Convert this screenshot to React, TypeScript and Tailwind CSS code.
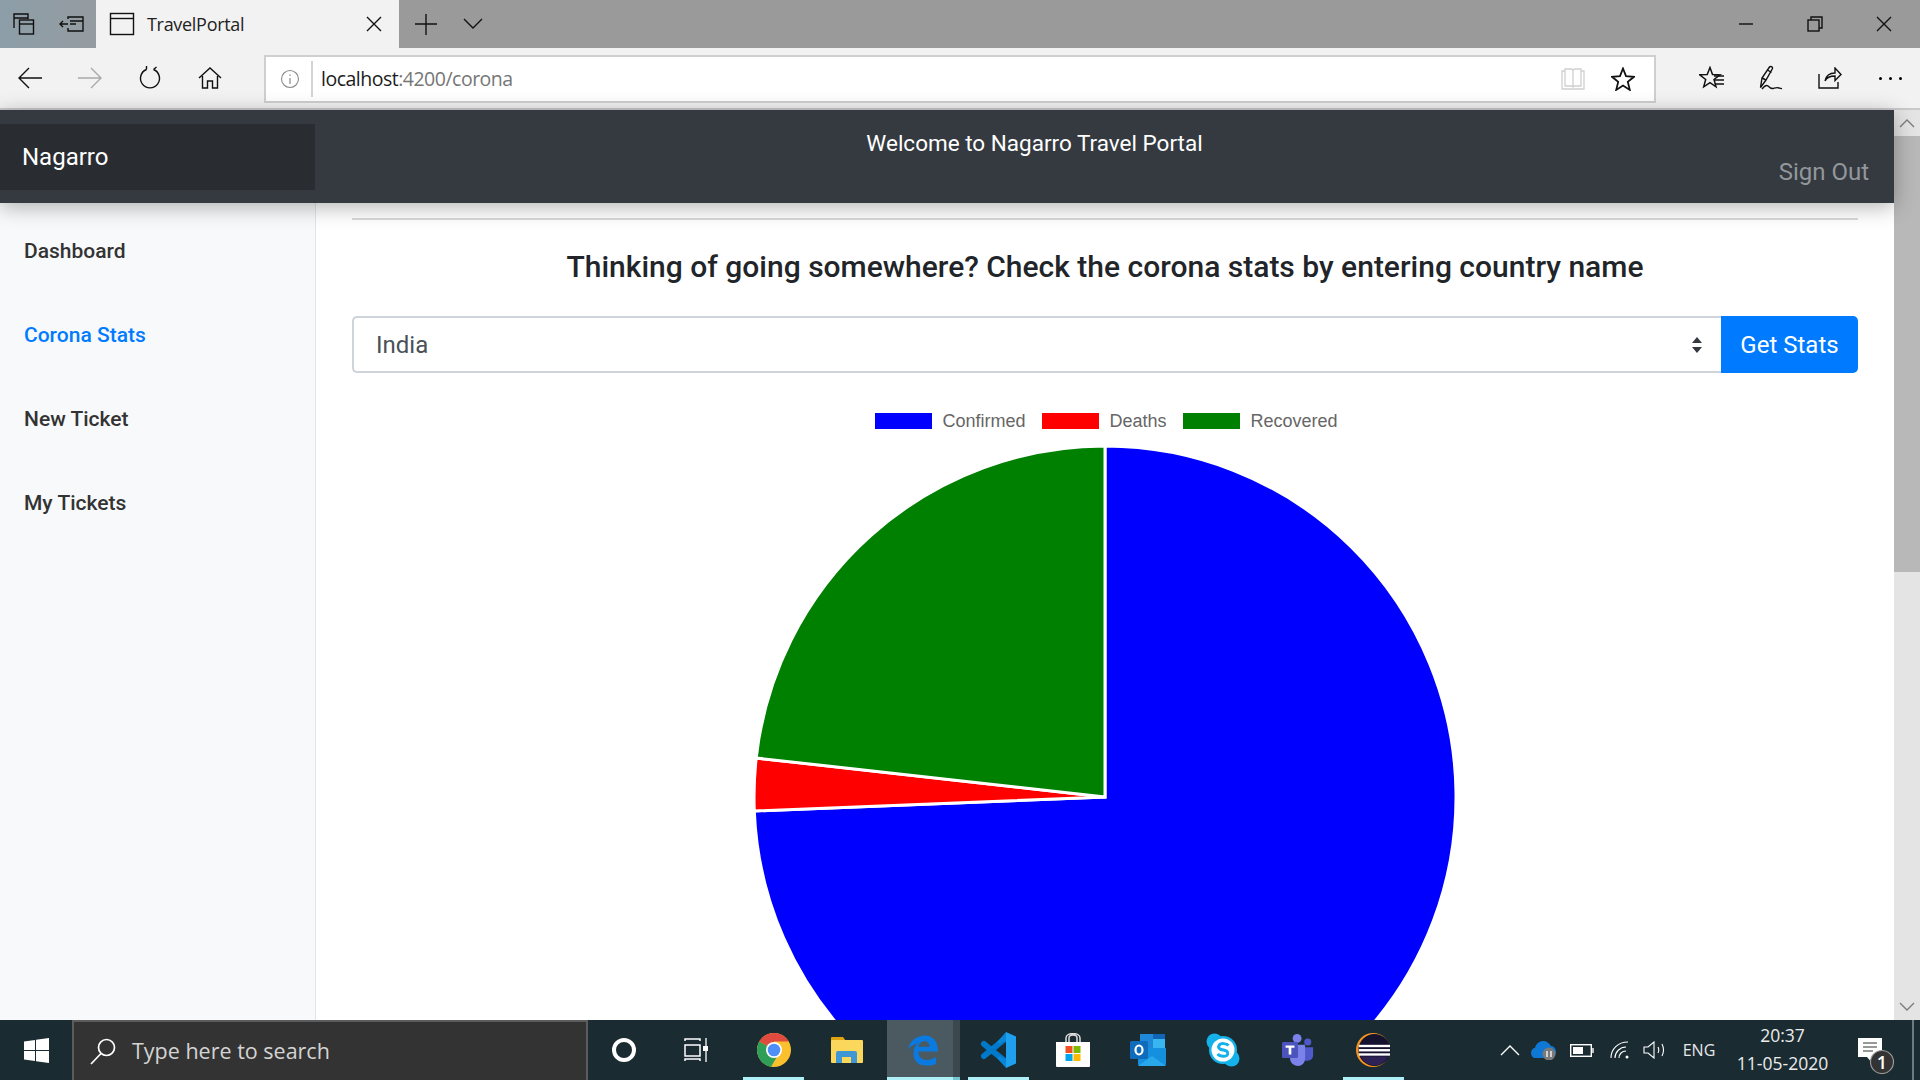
import React from "react";

const roboto = "font-['Roboto',sans-serif]";

function Ico({ w = 24, h = 24, vb, children, className = "" }: { w?: number; h?: number; vb?: string; children: React.ReactNode; className?: string }) {
  return (
    <svg width={w} height={h} viewBox={vb ?? `0 0 ${w} ${h}`} fill="none" stroke="currentColor" strokeWidth={1.4} className={"shrink-0 " + className}>
      {children}
    </svg>
  );
}

function TabBar() {
  return (
    <div className="h-12 flex items-stretch bg-gradient-to-r from-[#8d9ea8] from-0% to-[#9a9a9a] to-[9%] text-[#111]">
      <div className="w-12 flex items-center justify-center">
        <Ico w={24} h={24}><path d="M2 16V2h14v5M2 6h14" /><rect x="7.500" y="8" width="14" height="14" /><path d="M7.500 12h14" /></Ico>
      </div>
      <div className="w-12 flex items-center justify-center">
        <Ico w={26} h={20}><path d="M9 10H1m3-3-3 3 3 3M9 5V3h15v14H9v-3M11 7h13M11 10h6" /></Ico>
      </div>
      <div className="w-[303px] bg-[#f2f2f2] flex items-center pl-[13px] pr-[16px]">
        <Ico w={26} h={26}><rect x="1.500" y="2.500" width="23" height="21" /><path d="M1.500 7.500h23" /></Ico>
        <span className="ml-[12px] text-[18px] leading-6 font-['Open_Sans',sans-serif] tracking-[-0.3px] text-[#222] flex-1">TravelPortal</span>
        <Ico w={18} h={18}><path d="M2 2l14 14M16 2 2 16" /></Ico>
      </div>
      <div className="w-[54px] flex items-center justify-center">
        <Ico w={24} h={24}><path d="M12 2v21M1 12h22" /></Ico>
      </div>
      <div className="w-[40px] flex items-center justify-center">
        <Ico w={22} h={14}><path d="M2 2l9 9 9-9" /></Ico>
      </div>
      <div className="flex-1" />
      <div className="w-[69px] flex items-center justify-center"><Ico w={16} h={4}><path d="M1 2h14" /></Ico></div>
      <div className="w-[69px] flex items-center justify-center"><Ico w={16} h={16}><rect x="1" y="4" width="11" height="11" /><path d="M4 4V1h11v11h-3" /></Ico></div>
      <div className="w-[69px] flex items-center justify-center"><Ico w={16} h={16}><path d="M1 1l14 14M15 1 1 15" /></Ico></div>
      <div className="w-[2px]" />
    </div>
  );
}

function ToolBar() {
  return (
    <div className="h-[62px] bg-[#f2f2f2] border-b-2 border-[#c9c9c9] flex items-start pt-[7px] text-[#111]">
      <div className="w-[60px] h-[46px] flex items-center justify-center"><Ico w={24} h={22}><path d="M24 11H1m10-10L1 11l10 10" /></Ico></div>
      <div className="w-[60px] h-[46px] flex items-center justify-center text-[#a9a9a9]"><Ico w={24} h={22}><path d="M0 11h23M13 1l10 10-10 10" /></Ico></div>
      <div className="w-[60px] h-[46px] flex items-center justify-center"><Ico w={24} h={24}><path d="M8.500 3.500a9.500 9.500 0 1 0 7 0M8.500 3.500V0M15.500 3.500l3-2.500" /></Ico></div>
      <div className="w-[60px] h-[46px] flex items-center justify-center"><Ico w={24} h={24}><path d="M1 12 12 2l11 10M4.500 10v12h5v-7h5v7h5V10" /></Ico></div>
      <div className="ml-[24px] w-[1392px] h-[48px] bg-white border-2 border-[#cfcfcf] flex items-center shrink-0">
        <div className="w-[45px] flex justify-center text-[#8a8a8a]">
          <Ico w={20} h={20} className="ml-[2px]"><circle cx="10" cy="10" r="8.500" strokeWidth={1.1} /><path d="M10 9v6M10 5.500v1.500" strokeWidth={1.2} /></Ico>
        </div>
        <div className="w-[2px] h-[36px] bg-[#d4d4d4]" />
        <div className="ml-[8px] flex-1 text-[19.500px] font-['Open_Sans',sans-serif] tracking-[-0.5px] text-[#1c1c1c]">
          localhost<span className="text-[#767676]">:4200/corona</span>
        </div>
        <div className="w-[24px] text-[#cfcfcf] mr-[26px]">
          <Ico w={24} h={24}><path d="M1 4h3V2h6c1 0 2 1 2 2 0-1 1-2 2-2h6v2h3v18H1zM4 4v15h7l1 1 1-1h7V4M12 4v16" strokeWidth={1.3} /></Ico>
        </div>
        <div className="w-[26px] mr-[17px]">
          <Ico w={24} h={24}><path d="m12 1.500 3 7.700 8 .6-6.200 5.100 2 8-6.800-4.300-6.800 4.300 2-8L1 9.800l8-.6z" strokeWidth={1.8} /></Ico>
        </div>
      </div>
      <div className="ml-[26px] w-[60px] h-[46px] flex items-center justify-center">
        <Ico w={26} h={24}><path d="m11 1.500 2.500 7 7.500.3-6 4.700 2 7.300-6-4.200-6.300 4.200 2-7.300-6-4.700 7.500-.3z" strokeWidth={1.5} /><path d="M15 10h10M16 14h9M16 18h9" /></Ico>
      </div>
      <div className="w-[58px] h-[46px] flex items-center justify-center">
        <Ico w={24} h={26}><path d="M1.500 22.500 3 13 10.500 2c.8-1.200 3.500 0 3 1.500L7 15zM3 13l4 2M8.500 5l4 2.500" /><path d="M3 24c2.500-3 4-4.500 6-3 2 2 3 3 5 2.500 2-.5 4-1.500 6-.5 1 .3 2 .8 3 .5" /></Ico>
      </div>
      <div className="w-[60px] h-[46px] flex items-center justify-center">
        <Ico w={24} h={22}><path d="M1 7v14h19v-6M7 14c1-5 5-8 10-8V1l6 6.500-6 6V9c-4 0-8 1-10 5z" /></Ico>
      </div>
      <div className="w-[60px] h-[46px] flex items-center justify-center gap-[7px]">
        <span className="w-[3px] h-[3px] bg-black rounded-full" /><span className="w-[3px] h-[3px] bg-black rounded-full" /><span className="w-[3px] h-[3px] bg-black rounded-full" />
      </div>
    </div>
  );
}

function NavBar() {
  return (
    <div className={`relative z-10 h-[93px] bg-[#343a40] pt-[14px] flex items-start shadow-[0_4px_20px_rgba(0,0,0,0.3)] ${roboto}`}>
      <div className="w-[315px] h-[66px] bg-[#292d32] text-white text-[24px] flex items-center pl-[22px] shrink-0">Nagarro</div>
      <div className="flex-1 relative h-full text-center text-white text-[22.500px] leading-[34px] pt-[2px] pr-[140px]">
        <span>Welcome to Nagarro Travel Portal</span>
        <span className="absolute right-[25px] top-[31px] text-[#93979b] text-[24px]">Sign Out</span>
      </div>
    </div>
  );
}

function Sidebar() {
  const items = ["Dashboard", "Corona Stats", "New Ticket", "My Tickets"];
  return (
    <div className={`w-[316px] shrink-0 bg-[#f8f9fa] border-r border-[#e3e4e5] pt-[31px] ${roboto}`}>
      {items.map((t, i) => (
        <div key={t} className={`h-[84px] pl-[24px] text-[21px] leading-[34px] font-medium ${i === 1 ? "text-[#007bff]" : "text-[#333]"}`}>{t}</div>
      ))}
    </div>
  );
}

function Pie() {
  return (
    <svg width="706" height="706" viewBox="-2 -2 706 706" className="block mx-auto mt-[15px]">
      <g stroke="#fff" strokeWidth="3">
        <path d="M351 351 L351 0 A351 351 0 1 1 0.300 365 Z" fill="#0000ff" />
        <path d="M351 351 L0.300 365 A351 351 0 0 1 2.200 312 Z" fill="#ff0000" />
        <path d="M351 351 L2.200 312 A351 351 0 0 1 351 0 Z" fill="#008000" />
      </g>
    </svg>
  );
}

function Main() {
  const legend = [
    ["Confirmed", "bg-[#0000ff]", "w-[83px]", "mr-[16px]"],
    ["Deaths", "bg-[#ff0000]", "w-[57px]", "mr-[16px]"],
    ["Recovered", "bg-[#008000]", "w-[85px]", ""],
  ];
  return (
    <div className={`flex-1 min-w-0 bg-white px-[36px] ${roboto} overflow-hidden`}>
      <div className="h-[15px]" />
      <div className="h-[2px] bg-[#d8d9da]" />
      <h4 className="mt-[29px] h-[36px] text-center text-[30px] leading-[36px] font-medium text-[#212529] whitespace-nowrap">
        Thinking of going somewhere? Check the corona stats by entering country name
      </h4>
      <div className="mt-[31px] flex h-[57px]">
        <div className="flex-1 flex items-center border-2 border-r-0 border-[#ced4da] rounded-l-[5px] pl-[22px] pr-[18px] text-[#495057] text-[24px]">
          <span className="flex-1">India</span>
          <svg width="12" height="18" viewBox="0 0 12 18" className="shrink-0" fill="#343a40"><path d="M6 1l5 6H1zM6 17l5-6H1z" /></svg>
        </div>
        <div className="w-[137px] bg-[#007bff] text-white text-[24px] flex items-center justify-center rounded-r-[5px]">Get Stats</div>
      </div>
      <div className="mt-[40px] flex justify-center items-center h-[16px] font-['Liberation_Sans',sans-serif] text-[18px] text-[#666]">
        {legend.map(([t, c, w, m]) => (
          <div key={t} className="flex items-center">
            <span className={`w-[57px] h-[16px] ${c}`} />
            <span className={`ml-[11px] ${m} ${w} whitespace-nowrap`}>{t}</span>
          </div>
        ))}
      </div>
      <Pie />
    </div>
  );
}

function Scrollbar() {
  return (
    <div className="w-[26px] shrink-0 bg-[#e4e4e4] flex flex-col">
      <div className="h-[26px] flex items-center justify-center text-[#7c7c7c]"><Ico w={16} h={10}><path d="M1 9l7-7 7 7" /></Ico></div>
      <div className="h-[436px] bg-[#b8b8b8]" />
      <div className="flex-1" />
      <div className="h-[26px] flex items-center justify-center text-[#7c7c7c]"><Ico w={16} h={10}><path d="M1 1l7 7 7-7" /></Ico></div>
    </div>
  );
}

function Slot({ w, children, className = "" }: { w: string; children: React.ReactNode; className?: string }) {
  return <div className={`relative h-full flex items-center justify-center shrink-0 ${w} ${className}`}>{children}</div>;
}
const Under = ({ cls = "left-[3px] right-[3px]" }: { cls?: string }) => <span className={`absolute bottom-0 h-[3px] bg-[#aef0f8] ${cls}`} />;

function Taskbar() {
  return (
    <div className="h-[60px] bg-[#1a2b31] flex items-stretch text-white relative shrink-0">
      <div className="w-[72px] flex items-center justify-center shrink-0">
        <svg width="25" height="25" viewBox="0 0 25 25" fill="#fff"><path d="M0 3.500 11 2v10H0zM12 1.800 25 0v12H12zM0 13h11v10L0 21.500zM12 13h13v12l-13-1.800z" /></svg>
      </div>
      <div className="w-[516px] shrink-0 bg-[#333] border-2 border-b-0 border-[#5c5c5c] flex items-center pl-[15px] font-['Open_Sans',sans-serif] text-[21.500px] text-[#d4d4d4]">
        <Ico w={28} h={28} className="text-white"><circle cx="17.500" cy="10.500" r="8" strokeWidth={1.7} /><path d="M12 16.500 2 27" strokeWidth={1.7} /></Ico>
        <span className="ml-[15px]">Type here to search</span>
      </div>
      <Slot w="w-[72px]"><span className="w-[24px] h-[24px] rounded-full border-[4px] border-white" /></Slot>
      <Slot w="w-[72px]">
        <Ico w={24} h={24}><path d="M1 3V1h15v2M1 23v-2h15v2M1 7h15v11H1z" strokeWidth={1.5} /><path d="M22 0v24" strokeWidth={1.3} /></Ico>
        <span className="absolute left-[43px] top-[26px] w-[5px] h-[5px] bg-white" />
      </Slot>
      {/* chrome */}
      <Slot w="w-[67px] ml-[8px]">
        <svg width="34" height="34" viewBox="0 0 34 34">
          <circle cx="17" cy="17" r="17" fill="#fbc02d" />
          <path d="M17 17 2.300 8.500A17 17 0 0 1 31.700 8.500H17z" fill="#e04a3f" />
          <path d="M17 17 2.300 8.500A17 17 0 0 0 14 33.700l6-10z" fill="#2f9e57" />
          <circle cx="17" cy="17" r="8" fill="#fff" /><circle cx="17" cy="17" r="6.300" fill="#4f8ef7" />
        </svg>
        <Under />
      </Slot>
      {/* explorer */}
      <Slot w="w-[80px]">
        <svg width="32" height="26" viewBox="0 0 32 26">
          <path d="M0 1a1 1 0 0 1 1-1h11l3 4H0z" fill="#e0a30f" />
          <rect x="0" y="3" width="32" height="23" rx="1" fill="#fbd75b" />
          <path d="M5 26V16a2 2 0 0 1 2-2h17a2 2 0 0 1 2 2v10h-6v-6h-9v6z" fill="#3f97d6" />
        </svg>
      </Slot>
      {/* edge */}
      <Slot w="w-[66px] bg-[#4a5a60] pl-[6px]">
        <svg width="30" height="31" viewBox="0 0 32 32">
          <path d="M0 15C2 5 10 0 18 0c8 0 14 6 14 17H11c0 6 4 9 9 9 4 0 7-1 10-3v7c-3 2-7 2-11 2-8 0-14-6-13-14 0-5 2-8 6-10-5 1-9 3-12 7zM11 12h12c0-4-2-6-6-6-3 0-5 2-6 6z" fill="#0a7ae0" fillRule="evenodd" />
        </svg>
        <Under cls="left-0 right-0" />
      </Slot>
      <div className="w-[7px] bg-[#3b494e] shrink-0 relative"><span className="absolute bottom-0 inset-x-0 h-[3px] bg-[#74c7d2]" /></div>
      {/* vscode */}
      <Slot w="w-[76px]">
        <svg width="36" height="36" viewBox="0 0 36 36">
          <path d="M4 12 26 30M4 24 26 6" stroke="#0179cb" strokeWidth="6" strokeLinecap="round" fill="none" />
          <path d="M26 0l10 4.500v27L26 36V6z" fill="#1fa0ee" />
          <path d="M26 0v8l-6 4-3-2zM26 36v-8l-6-4-3 2z" fill="#0a86d8" />
        </svg>
        <Under cls="left-[8px] right-[7px]" />
      </Slot>
      {/* store */}
      <Slot w="w-[74px]">
        <svg width="36" height="34" viewBox="0 0 36 34">
          <path d="M11 10V5c0-6 14-6 14 0v5M14 10V5c0-4 8-4 8 0v5" stroke="#ddd" strokeWidth="1.500" fill="none" />
          <path d="M1 9h34v24a1 1 0 0 1-1 1H2a1 1 0 0 1-1-1z" fill="#fff" />
          <rect x="10.500" y="13" width="7" height="7" fill="#f25022" /><rect x="18.500" y="13" width="7" height="7" fill="#7fba00" />
          <rect x="10.500" y="21" width="7" height="7" fill="#00a4ef" /><rect x="18.500" y="21" width="7" height="7" fill="#ffb900" />
        </svg>
      </Slot>
      {/* outlook */}
      <Slot w="w-[75px]">
        <svg width="36" height="32" viewBox="0 0 36 32">
          <path d="M10 0h25v16H10z" fill="#1f88d8" /><path d="M23 0h12v5H23z" fill="#1066b5" /><path d="M23 5h12v9H23z" fill="#38b6ef" />
          <path d="M8 14h28v16a2 2 0 0 1-2 2H10a2 2 0 0 1-2-2z" fill="#1490df" /><path d="M8 32l14-10 14 10z" fill="#28a8ea" />
          <rect x="0" y="7" width="18" height="18" rx="1.500" fill="#0f6cbd" /><ellipse cx="9" cy="16" rx="3.500" ry="4.500" fill="none" stroke="#fff" strokeWidth="2.200" />
        </svg>
      </Slot>
      {/* skype */}
      <Slot w="w-[75px]">
        <svg width="34" height="34" viewBox="0 0 34 34">
          <circle cx="8.500" cy="8.500" r="8" fill="#14b1ea" /><circle cx="25.500" cy="25.500" r="8" fill="#14b1ea" /><circle cx="17" cy="17" r="14" fill="#14b1ea" />
          <circle cx="17" cy="17" r="11.500" fill="#fff" />
          <path d="M22.500 12.500c-1.500-2-8-3-9.500 0-1.500 3 1.500 4 4.500 4.500 3 .5 5 1.500 4 4.500-1 2.500-7.500 2.500-10-.5" stroke="#14b1ea" strokeWidth="3" fill="none" />
        </svg>
      </Slot>
      {/* teams */}
      <Slot w="w-[75px]">
        <svg width="36" height="32" viewBox="0 0 36 36">
          <circle cx="17" cy="5" r="5" fill="#7b83eb" /><circle cx="29" cy="9" r="4" fill="#5059c9" />
          <path d="M24 15h11v9c0 4-3 6-6 6h-5z" fill="#5059c9" />
          <path d="M9 12h17v15c0 6-4 9-8 9s-9-3-9-9z" fill="#7b83eb" />
          <rect x="0" y="9" width="18" height="18" rx="1.500" fill="#4b53bc" /><path d="M4 13h10v2.500h-3.500V23h-3v-7.500H4z" fill="#fff" />
        </svg>
      </Slot>
      {/* eclipse */}
      <Slot w="w-[76px]">
        <svg width="36" height="34" viewBox="0 0 36 36">
          <circle cx="18" cy="18" r="18" fill="#f7941e" /><circle cx="19.500" cy="18" r="17" fill="#15122f" /><path d="M5 25h29a16 16 0 0 1-29 0z" fill="#2c2255" />
          <rect x="3" y="12.500" width="33" height="2.500" fill="#fff" /><rect x="3" y="17" width="33" height="2.500" fill="#fff" /><rect x="3" y="21.500" width="33" height="2.500" fill="#fff" />
        </svg>
        <Under cls="left-[8px] right-[7px]" />
      </Slot>
      <div className="flex-1" />
      {/* tray */}
      <Slot w="w-[30px]"><Ico w={20} h={11}><path d="M1 10l9-9 9 9" /></Ico></Slot>
      <Slot w="w-[38px]">
        <svg width="26" height="20" viewBox="0 0 26 20"><path d="M0 13c0-3 2-5 4-5 1-4 4-7 8-7s6 2 8 5c3 0 5 3 5 6 0 3-3 6-6 6H4c-2 0-4-2-4-5z" fill="#0f78d4" /><circle cx="18" cy="14" r="6.500" fill="#7a7a7a" /><path d="M16 11v6M20 11v6" stroke="#fff" strokeWidth="1.300" /></svg>
      </Slot>
      <Slot w="w-[38px]"><Ico w={24} h={13}><rect x=".7" y=".7" width="20.600" height="11.600" /><rect x="3" y="3" width="10" height="7" fill="#fff" stroke="none" /><path d="M23 4v5" /></Ico></Slot>
      <Slot w="w-[37px]"><Ico w={20} h={18}><path d="M1 17C1 8 8 1 18 1M5 17c0-6 5-11 11-11M9 17c0-4 3-7 7-7" strokeWidth={1.1} /><circle cx="17" cy="16" r="1.500" fill="#fff" stroke="none" /></Ico></Slot>
      <Slot w="w-[33px]"><Ico w={24} h={18}><path d="M1 6h4l6-5v16l-6-5H1zM15 6c1 2 1 4 0 6M19 3c2 4 2 8 0 12" strokeWidth={1.1} /></Ico></Slot>
      <Slot w="w-[56px]"><span className="font-['Open_Sans',sans-serif] text-[16px] text-[#e8e8e8]">ENG</span></Slot>
      <div className="w-[111px] shrink-0 flex flex-col items-center font-['Open_Sans',sans-serif] text-[17.500px] leading-[28px] text-[#ececec] pt-[1px]">
        <span>20:37</span><span>11-05-2020</span>
      </div>
      <Slot w="w-[74px]">
        <svg width="40" height="48" viewBox="0 0 40 48">
          <path d="M3 12h24v19H19l-1 7-6-7H3z" fill="#fff" /><path d="M8 17h14M8 21h14M8 25h10" stroke="#333" strokeWidth="1.200" />
          <circle cx="27" cy="36" r="11.500" fill="#333" stroke="#999" strokeWidth="1.200" />
          <text x="27" y="42.500" fontSize="18" fill="#fff" textAnchor="middle" fontFamily="Open Sans" fontWeight="600">1</text>
        </svg>
      </Slot>
      <span className="w-[2px] shrink-0 h-full bg-[#6d7a7f]" />
      <div className="w-[6px] shrink-0" />
    </div>
  );
}

export default function App() {
  return (
    <div className="w-[1920px] h-[1080px] flex flex-col overflow-hidden">
      <TabBar />
      <ToolBar />
      <div className="flex-1 min-h-0 flex">
        <div className="flex-1 min-w-0 flex flex-col">
          <NavBar />
          <div className="flex-1 min-h-0 flex overflow-hidden">
            <Sidebar />
            <Main />
          </div>
        </div>
        <Scrollbar />
      </div>
      <Taskbar />
    </div>
  );
}
